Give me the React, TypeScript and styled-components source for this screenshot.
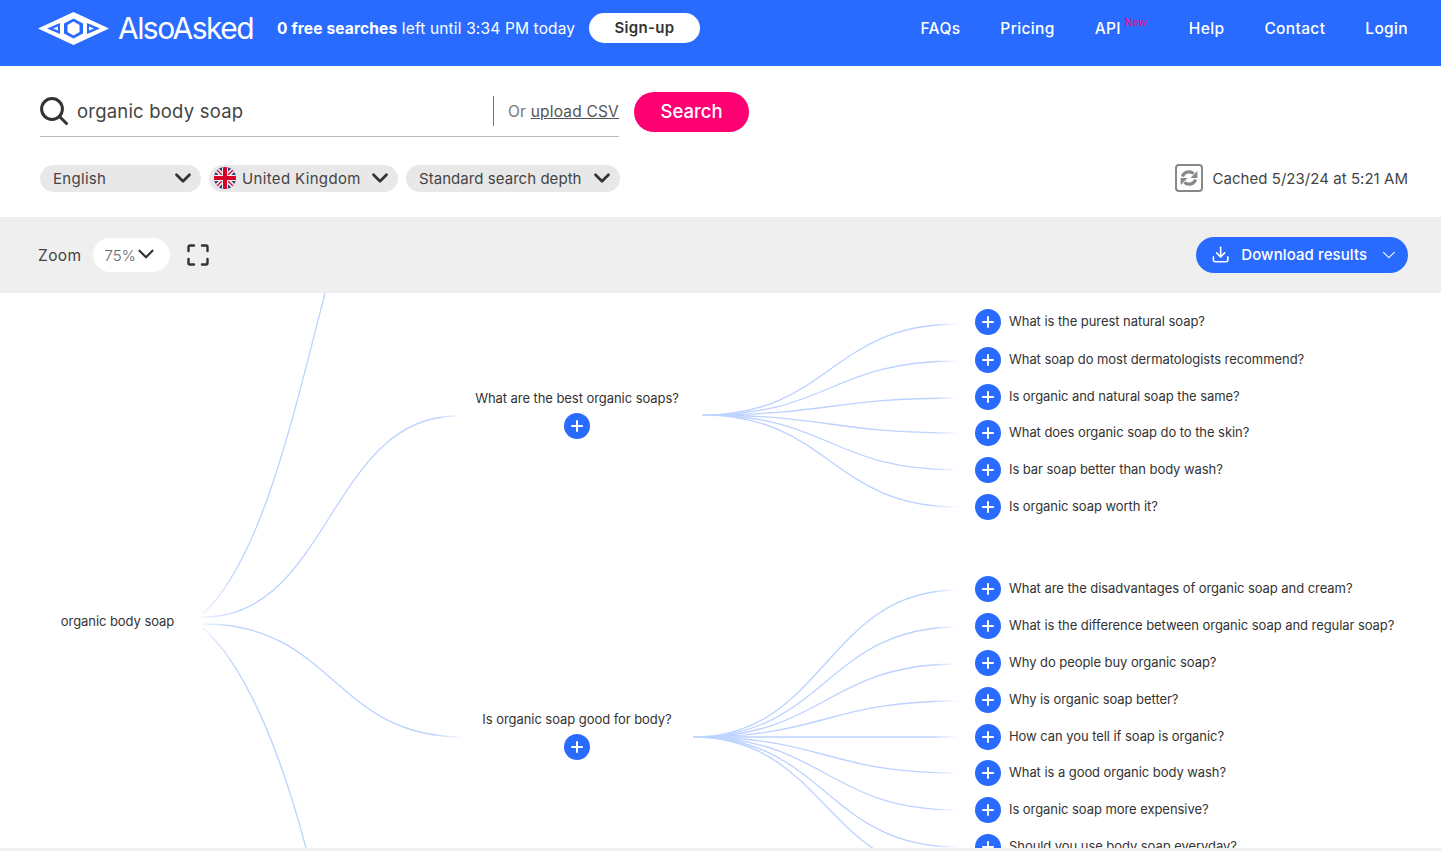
import React from 'react'
import styled, { createGlobalStyle } from 'styled-components'
import { ChevronDown, Download } from 'lucide-react'

const BLUE = '#296bff'
const PINK = '#ff0073'
const INK = '#333333'

const GlobalStyle = createGlobalStyle`
  html, body {
    margin: 0;
    padding: 0;
    background: #fff;
  }
  body {
    font-family: Inter, "Open Sans", "Liberation Sans", sans-serif;
    color: ${INK};
  }
`

const Page = styled.div`
  height: 851px;
  display: flex;
  flex-direction: column;
  overflow: hidden;
`

const Header = styled.header`
  height: 66px;
  flex: none;
  background: ${BLUE};
  color: #fff;
  display: flex;
  align-items: center;
  padding: 0 33px 10px 38px;
  box-sizing: border-box;
`

const Brand = styled.div`
  display: flex;
  align-items: center;
  gap: 9px;
  width: 239px;
  flex: none;
`

const BrandName = styled.span`
  font-size: 30px;
  font-weight: 400;
  letter-spacing: -1.55px;
  line-height: 32px;
  white-space: nowrap;
`

const Quota = styled.div`
  font-size: 15.5px;
  letter-spacing: 0.15px;
  white-space: nowrap;
  width: 312px;
  flex: none;
  b {
    font-weight: 700;
  }
`

const SignUp = styled.button`
  width: 111px;
  height: 30px;
  border: 0;
  border-radius: 15px;
  background: #fff;
  color: ${INK};
  font: 600 15px Inter, sans-serif;
  letter-spacing: 0.3px;
  padding: 0 0 2px;
`

const Nav = styled.nav`
  margin-left: auto;
  display: flex;
  align-items: center;
  gap: 40px;
`

const NavLink = styled.a<{ $badged?: boolean }>`
  position: relative;
  font-size: 15.5px;
  font-weight: 500;
  letter-spacing: 0.35px;
  white-space: nowrap;
  padding-right: ${p => (p.$badged ? 28 : 0)}px;
`

const NewBadge = styled.sup`
  position: absolute;
  left: 30px;
  top: -2px;
  color: ${PINK};
  font-size: 10.5px;
  font-weight: 400;
  letter-spacing: 0;
  line-height: 12px;
`

const SearchArea = styled.section`
  height: 151px;
  flex: none;
  box-sizing: border-box;
  padding: 26px 33px 0 40px;
`

const SearchRow = styled.div`
  display: flex;
  align-items: flex-start;
  gap: 15px;
`

const SearchBox = styled.div`
  width: 579px;
  height: 45px;
  box-sizing: border-box;
  border-bottom: 1px solid #bbbbbb;
  display: flex;
  align-items: flex-start;
  padding-top: 4px;
`

const MagnifierIcon = styled.svg`
  width: 28px;
  height: 28px;
  flex: none;
  margin-top: 1px;
`

const QueryText = styled.div`
  flex: 1;
  margin-left: 9px;
  font-size: 18.5px;
  line-height: 30px;
  letter-spacing: 0.2px;
  color: #444;
`

const UploadNote = styled.div`
  height: 30px;
  border-left: 1px solid #777;
  padding-left: 14px;
  font-size: 15.5px;
  line-height: 32px;
  letter-spacing: 0.2px;
  color: #777;
  white-space: nowrap;
  a {
    color: #555;
    text-decoration: underline;
  }
`

const SearchButton = styled.button`
  width: 115px;
  height: 40px;
  border: 0;
  border-radius: 20px;
  background: ${PINK};
  color: #fff;
  font: 500 18.5px Inter, sans-serif;
  padding: 0 0 2px;
`

const FilterRow = styled.div`
  margin-top: 27px;
  display: flex;
  align-items: center;
  gap: 8px;
`

const Pill = styled.div<{ $width: number; $tracking: number }>`
  width: ${p => p.$width}px;
  height: 27px;
  box-sizing: border-box;
  border-radius: 14px;
  background: #e8e8e8;
  display: flex;
  align-items: center;
  padding: 0 5px 0 13px;
  font-size: 15px;
  letter-spacing: ${p => p.$tracking}px;
  color: #444;
  white-space: nowrap;
  svg:last-child {
    margin-left: auto;
  }
`

const FlagPill = styled(Pill)`
  padding-left: 5px;
  gap: 6px;
`

const CacheInfo = styled.div`
  margin-left: auto;
  display: flex;
  align-items: center;
  gap: 10px;
  font-size: 15px;
  letter-spacing: 0.04px;
  color: #444;
  white-space: nowrap;
`

const CacheIconBox = styled.span`
  width: 28px;
  height: 28px;
  box-sizing: border-box;
  border: 2px solid #888;
  border-radius: 4px;
  display: flex;
  align-items: center;
  justify-content: center;
`

const Toolbar = styled.section`
  height: 76px;
  flex: none;
  box-sizing: border-box;
  background: #efefef;
  display: flex;
  align-items: center;
  padding: 0 33px 1px 38px;
`

const ZoomLabel = styled.span`
  font-size: 15.5px;
  letter-spacing: 0.4px;
  padding-top: 1px;
  color: #444;
`

const ZoomSelect = styled.div`
  margin-left: 11px;
  width: 77px;
  height: 34px;
  box-sizing: border-box;
  border-radius: 17px;
  background: #fff;
  display: flex;
  align-items: center;
  padding: 1px 0 0 12px;
  font-size: 15px;
  font-weight: 300;
  color: #666;
  svg {
    margin: -2px 0 0 -3px;
  }
`

const FullscreenIcon = styled.svg`
  margin-left: 17px;
  width: 22px;
  height: 22px;
`

const DownloadButton = styled.button`
  margin-left: auto;
  width: 212px;
  height: 36px;
  border: 0;
  border-radius: 18px;
  background: ${BLUE};
  color: #fff;
  font: 500 15px Inter, sans-serif;
  letter-spacing: 0.1px;
  white-space: nowrap;
  display: flex;
  align-items: center;
  padding: 0 8px 0 15px;
  gap: 11px;
  svg:last-child {
    margin-left: auto;
  }
`

const Canvas = styled.main`
  position: relative;
  flex: 1;
  overflow: hidden;
  background: #fff;
`

const Links = styled.svg`
  position: absolute;
  left: 0;
  top: 0;
  width: 1441px;
  height: 555px;
`

const RootLabel = styled.div`
  position: absolute;
  left: 0;
  top: 320px;
  width: 235px;
  text-align: center;
  font-size: 13px;
  letter-spacing: -0.06px;
  line-height: 16px;
  color: ${INK};
`

const BranchNode = styled.div<{ $x: number; $y: number }>`
  position: absolute;
  left: ${p => p.$x - 150}px;
  top: ${p => p.$y}px;
  width: 300px;
  display: flex;
  flex-direction: column;
  align-items: center;
  gap: 7px;
  font-size: 13px;
  letter-spacing: -0.06px;
  line-height: 16px;
  color: ${INK};
`

const LeafNode = styled.div<{ $y: number }>`
  position: absolute;
  left: 975px;
  top: ${p => p.$y - 13}px;
  display: flex;
  align-items: center;
  gap: 8px;
  font-size: 13px;
  letter-spacing: -0.06px;
  line-height: 24px;
  color: ${INK};
  white-space: nowrap;
`

const LeafText = styled.span`
  padding-bottom: 2px;
`

const PlusButton = styled.span`
  width: 26px;
  height: 26px;
  flex: none;
  border-radius: 50%;
  background: ${BLUE};
  display: flex;
  align-items: center;
  justify-content: center;
`

const BottomStrip = styled.div`
  height: 3px;
  flex: none;
  background: #efefef;
`

const Logo = () => (
  <svg width="71" height="33" viewBox="0 0 71 33" fill="none">
    <path d="M0 16.5 35.5 0 71 16.5 35.5 33Z" fill="#fff" />
    <path d="M9 16.5 22 11V22Z" fill={BLUE} />
    <path d="M15 16.5 20 14.4V18.6Z" fill="#fff" />
    <path d="M62 16.5 49 11V22Z" fill={BLUE} />
    <path d="M56 16.5 51 14.4V18.6Z" fill="#fff" />
    <path d="M35.5 6.5 45 11.5V21.5L35.5 26.5 26 21.5V11.5Z" fill={BLUE} />
    <path d="M35.5 9.5 41.5 13V20L35.5 23.5 29.5 20V13Z" fill="#fff" />
  </svg>
)

const UkFlag = () => (
  <svg width="22" height="22" viewBox="0 0 22 22">
    <defs>
      <clipPath id="flag-clip">
        <circle cx="11" cy="11" r="11" />
      </clipPath>
    </defs>
    <g clipPath="url(#flag-clip)">
      <rect width="22" height="22" fill="#2b3f87" />
      <path d="M0 0 22 22M22 0 0 22" stroke="#f4f4f4" strokeWidth="4.5" />
      <path d="M0 0 22 22M22 0 0 22" stroke="#d80027" strokeWidth="1.3" />
      <path d="M8 0H14V8H22V14H14V22H8V14H0V8H8Z" fill="#f4f4f4" />
      <path d="M9 0H13V9H22V13H13V22H9V13H0V9H9Z" fill="#d80027" />
    </g>
  </svg>
)

const RefreshIcon = () => (
  <svg width="20" height="20" viewBox="0 0 20 20" fill="none" stroke="#888" strokeWidth="3.2">
    <path d="M3.4 8.6A6.9 6.9 0 0 1 14.6 5.6" />
    <path d="M16.6 11.4A6.9 6.9 0 0 1 5.4 14.4" />
    <path d="M18.4 3V10H11.4Z" fill="#888" stroke="none" />
    <path d="M1.6 17V10H8.6Z" fill="#888" stroke="none" />
  </svg>
)

const PlusIcon = () => (
  <svg width="12" height="12" viewBox="0 0 12 12" stroke="#fff" strokeWidth="2" strokeLinecap="round">
    <path d="M6 1V11M1 6H11" />
  </svg>
)

// end points of the question links, one array per parent
const topLeaves = [
  { y: 322, end: 324, text: 'What is the purest natural soap?' },
  { y: 360, end: 361, text: 'What soap do most dermatologists recommend?' },
  { y: 397, end: 398, text: 'Is organic and natural soap the same?' },
  { y: 433, end: 433, text: 'What does organic soap do to the skin?' },
  { y: 470, end: 470, text: 'Is bar soap better than body wash?' },
  { y: 507, end: 507, text: 'Is organic soap worth it?' },
]

const bottomLeaves = [
  { y: 589, end: 590, text: 'What are the disadvantages of organic soap and cream?' },
  { y: 626, end: 627, text: 'What is the difference between organic soap and regular soap?' },
  { y: 663, end: 664, text: 'Why do people buy organic soap?' },
  { y: 700, end: 701, text: 'Why is organic soap better?' },
  { y: 737, end: 737, text: 'How can you tell if soap is organic?' },
  { y: 773, end: 773, text: 'What is a good organic body wash?' },
  { y: 810, end: 810, text: 'Is organic soap more expensive?' },
  { y: 847, end: 847, text: 'Should you use body soap everyday?' },
]

const CANVAS_TOP = 293

const curve = (x0: number, y0: number, x1: number, y1: number) => {
  const mid = (x0 + x1) / 2
  return `M${x0} ${y0 - CANVAS_TOP}C${mid} ${y0 - CANVAS_TOP} ${mid} ${y1 - CANVAS_TOP} ${x1} ${y1 - CANVAS_TOP}`
}

const leafLinks = [
  ...topLeaves.map(l => ({ id: 'fade-top', d: curve(702, 415, 958, l.end) })),
  ...bottomLeaves.map(l => ({ id: 'fade-bottom', d: curve(693, 737, 958, l.end) })),
  { id: 'fade-bottom', d: curve(693, 737, 958, 874) },
]

const FadeGradient = ({ id, from, to }: { id: string; from: number; to: number }) => (
  <linearGradient id={id} gradientUnits="userSpaceOnUse" x1={from} x2={to} y1="0" y2="0">
    <stop offset="0" stopColor="#bcd2ff" stopOpacity="0.25" />
    <stop offset="0.14" stopColor="#bcd2ff" />
    <stop offset="0.9" stopColor="#bcd2ff" />
    <stop offset="1" stopColor="#bcd2ff" stopOpacity="0" />
  </linearGradient>
)

const PillChevron = () => <ChevronDown size={26} color="#333" strokeWidth={2.5} />

export default function App() {
  return (
    <Page>
      <GlobalStyle />
      <Header>
        <Brand>
          <Logo />
          <BrandName>AlsoAsked</BrandName>
        </Brand>
        <Quota><b>0 free searches</b> left until 3:34 PM today</Quota>
        <SignUp>Sign-up</SignUp>
        <Nav>
          <NavLink>FAQs</NavLink>
          <NavLink>Pricing</NavLink>
          <NavLink $badged>API<NewBadge>New</NewBadge></NavLink>
          <NavLink>Help</NavLink>
          <NavLink>Contact</NavLink>
          <NavLink>Login</NavLink>
        </Nav>
      </Header>

      <SearchArea>
        <SearchRow>
          <SearchBox>
            <MagnifierIcon viewBox="0 0 28 28" fill="none" stroke="#333" strokeWidth="3" strokeLinecap="round">
              <circle cx="12" cy="12" r="10.4" />
              <path d="M20 20 26.5 26.5" />
            </MagnifierIcon>
            <QueryText>organic body soap</QueryText>
            <UploadNote>Or <a>upload CSV</a></UploadNote>
          </SearchBox>
          <SearchButton>Search</SearchButton>
        </SearchRow>
        <FilterRow>
          <Pill $width={161} $tracking={0.3}>English<PillChevron /></Pill>
          <FlagPill $width={189} $tracking={0.35}><UkFlag />United Kingdom<PillChevron /></FlagPill>
          <Pill $width={214} $tracking={0.05}>Standard search depth<PillChevron /></Pill>
          <CacheInfo>
            <CacheIconBox><RefreshIcon /></CacheIconBox>
            Cached 5/23/24 at 5:21 AM
          </CacheInfo>
        </FilterRow>
      </SearchArea>

      <Toolbar>
        <ZoomLabel>Zoom</ZoomLabel>
        <ZoomSelect>75%<ChevronDown size={26} color="#333" strokeWidth={2} /></ZoomSelect>
        <FullscreenIcon viewBox="0 0 22 22" fill="none" stroke="#333" strokeWidth="2.4" strokeLinecap="round">
          <path d="M1.5 7V3A1.5 1.5 0 0 1 3 1.5H7M15 1.5H19A1.5 1.5 0 0 1 20.5 3V7M20.5 15V19A1.5 1.5 0 0 1 19 20.5H15M7 20.5H3A1.5 1.5 0 0 1 1.5 19V15" />
        </FullscreenIcon>
        <DownloadButton>
          <Download size={23} color="#fff" strokeWidth={2} />
          Download results
          <ChevronDown size={26} color="#fff" strokeWidth={1.2} />
        </DownloadButton>
      </Toolbar>

      <Canvas>
        <Links viewBox="0 0 1441 555" fill="none">
          <defs>
            <FadeGradient id="fade-top" from={702} to={958} />
            <FadeGradient id="fade-bottom" from={693} to={958} />
            <FadeGradient id="fade-root" from={200} to={462} />
          </defs>
          <path d="M203 321C260 267 290 137 325 0" stroke="url(#fade-root)" strokeWidth="1.3" />
          <path d={curve(203, 617, 457, 416)} stroke="url(#fade-root)" strokeWidth="1.3" />
          <path d={curve(204, 624, 463, 737)} stroke="url(#fade-root)" strokeWidth="1.3" />
          <path d="M203 335C245 372 280 457 306 555" stroke="url(#fade-root)" strokeWidth="1.3" />
          {leafLinks.map(link => (
            <path key={link.d} d={link.d} stroke={`url(#${link.id})`} strokeWidth="1.3" />
          ))}
        </Links>

        <RootLabel>organic body soap</RootLabel>

        <BranchNode $x={577} $y={97}>
          What are the best organic soaps?
          <PlusButton><PlusIcon /></PlusButton>
        </BranchNode>
        <BranchNode $x={577} $y={418}>
          Is organic soap good for body?
          <PlusButton><PlusIcon /></PlusButton>
        </BranchNode>

        {[...topLeaves, ...bottomLeaves].map(leaf => (
          <LeafNode key={leaf.text} $y={leaf.y - CANVAS_TOP}>
            <PlusButton><PlusIcon /></PlusButton>
            <LeafText>{leaf.text}</LeafText>
          </LeafNode>
        ))}
      </Canvas>
      <BottomStrip />
    </Page>
  )
}
